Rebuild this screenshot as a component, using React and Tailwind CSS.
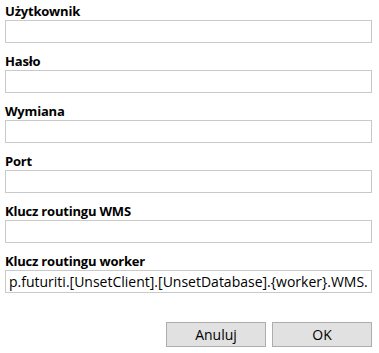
import { useState } from "react";

const fields = [
  { label: "Użytkownik", value: "" },
  { label: "Hasło", value: "" },
  { label: "Wymiana", value: "" },
  { label: "Port", value: "" },
  { label: "Klucz routingu WMS", value: "" },
  { label: "Klucz routingu worker", value: "p.futuriti.[UnsetClient].[UnsetDatabase].{worker}.WMS..{0}" },
];

function App() {
  const [values, setValues] = useState(fields.map((f) => f.value));

  return (
    <div
      className="w-[379px] h-[353px] bg-white pl-[5px] pr-[7px] pt-[3px] text-black"
      style={{ fontFamily: '"Open Sans", "Noto Sans", sans-serif' }}
    >
      {fields.map((field, i) => (
        <div key={field.label} className="mb-[10px]">
          <label className="block text-[13px] leading-[17px] font-bold tracking-[-0.2px]">{field.label}</label>
          <input
            type="text"
            value={values[i]}
            onChange={(e) => {
              const next = [...values];
              next[i] = e.target.value;
              setValues(next);
            }}
            className="block w-full h-[23px] border border-[#c9c9c9] bg-white px-[3px] text-[14px] leading-[21px] outline-none"
          />
        </div>
      ))}

      <div className="flex justify-end gap-[6px] mt-[29px]">
        <button className="w-[100px] h-[25px] border border-[#adadad] bg-[#e1e1e1] text-[14px] leading-[23px]">
          Anuluj
        </button>
        <button className="w-[100px] h-[25px] border border-[#adadad] bg-[#e1e1e1] text-[14px] leading-[23px]">
          OK
        </button>
      </div>
    </div>
  );
}

export default App;
